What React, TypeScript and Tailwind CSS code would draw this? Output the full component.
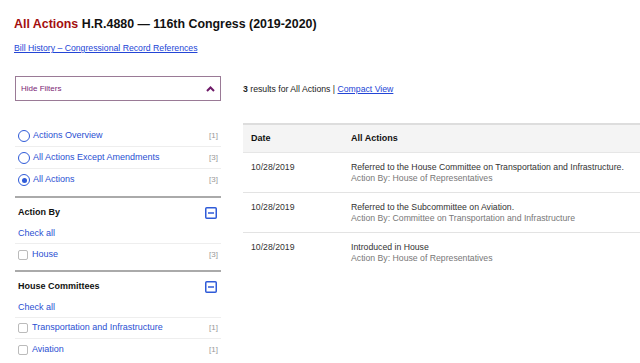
import React from "react";

const radios = [
  { label: "Actions Overview", count: 1, checked: false },
  { label: "All Actions Except Amendments", count: 3, checked: false },
  { label: "All Actions", count: 3, checked: true },
];

const sections = [
  { title: "Action By", items: [{ label: "House", count: 3 }] },
  {
    title: "House Committees",
    items: [
      { label: "Transportation and Infrastructure", count: 1 },
      { label: "Aviation", count: 1 },
    ],
  },
];

const actions = [
  {
    date: "10/28/2019",
    text: "Referred to the House Committee on Transportation and Infrastructure.",
    by: "House of Representatives",
  },
  {
    date: "10/28/2019",
    text: "Referred to the Subcommittee on Aviation.",
    by: "Committee on Transportation and Infrastructure",
  },
  {
    date: "10/28/2019",
    text: "Introduced in House",
    by: "House of Representatives",
  },
];

const Minus: React.FC = () => (
  <svg width="12" height="12" viewBox="0 0 12 12" className="shrink-0">
    <rect x="0.75" y="0.75" width="10.5" height="10.5" rx="1" fill="none" stroke="#2f5bd8" strokeWidth="1.5" />
    <line x1="3" y1="6" x2="9" y2="6" stroke="#2f5bd8" strokeWidth="1.5" />
  </svg>
);

const App: React.FC = () => {
  return (
    <div className="w-[640px] h-[363px] overflow-hidden bg-white font-['Liberation_Sans',Arial,sans-serif] text-[#222]">
      <div className="px-[14px] pt-[16px]">
        <h1 className="text-[12.4px] font-bold leading-[16px] text-[#111]">
          <span className="text-[#a30e0e]">All Actions</span> H.R.4880 — 116th Congress (2019-2020)
        </h1>
        <a className="block mt-[11px] text-[8.7px] leading-[11px] text-[#2345d6] underline">
          Bill History – Congressional Record References
        </a>
      </div>

      <div className="flex mt-[22px]">
        {/* filters */}
        <div className="w-[206px] ml-[15px] shrink-0">
          <div className="h-[25px] border border-[#9a7a96] flex items-center justify-between px-[5px] text-[8px] text-[#7b1e74]">
            <span>Hide Filters</span>
            <svg width="9" height="6" viewBox="0 0 9 6">
              <path d="M1 5 L4.5 1.5 L8 5" fill="none" stroke="#6e1a68" strokeWidth="2" />
            </svg>
          </div>

          <div className="mt-[24px]">
            {radios.map((r, i) => (
              <div
                key={i}
                className={`h-[22px] flex items-center justify-between pl-[3px] pr-[3px] ${i < radios.length - 1 ? "border-b border-[#eee]" : ""}`}
              >
                <div className="flex items-center gap-[3px]">
                  <span className="w-[12px] h-[12px] rounded-full border border-[#2f5bd8] flex items-center justify-center">
                    {r.checked && <span className="w-[5px] h-[5px] rounded-full bg-[#2f5bd8]" />}
                  </span>
                  <span className="text-[9px] text-[#2a4fd2]">{r.label}</span>
                </div>
                <span className="text-[8px] text-[#999]">[{r.count}]</span>
              </div>
            ))}
          </div>

          {sections.map((s, si) => (
            <div key={si} className="border-t-2 border-[#aaa] mt-[5px]">
              <div className="h-[26px] pt-[3px] flex items-center justify-between pl-[3px] pr-[4px]">
                <span className="text-[9px] font-bold text-[#111]">{s.title}</span>
                <Minus />
              </div>
              <div className="h-[20px] flex items-center pl-[3px] text-[9px] text-[#2a4fd2] border-b border-[#eee]">
                Check all
              </div>
              {s.items.map((it, ii) => (
                <div
                  key={ii}
                  className={`h-[21px] flex items-center justify-between pl-[3px] pr-[3px] ${ii < s.items.length - 1 ? "border-b border-[#eee]" : ""}`}
                >
                  <div className="flex items-center gap-[4px]">
                    <span className="w-[10px] h-[10px] rounded-[2px] border border-[#bbb]" />
                    <span className="text-[9px] text-[#2a4fd2]">{it.label}</span>
                  </div>
                  <span className="text-[8px] text-[#999]">[{it.count}]</span>
                </div>
              ))}
            </div>
          ))}
        </div>

        {/* results */}
        <div className="ml-[22px] flex-1">
          <p className="mt-[7px] text-[8.7px] leading-[12px] text-[#222]">
            <span className="font-bold">3</span> results for All Actions |{" "}
            <a className="text-[#2345d6] underline">Compact View</a>
          </p>

          <div className="mt-[28px] border-t-2 border-[#ddd]">
            <div className="h-[28px] bg-[#f4f4f4] flex items-center text-[9px] font-bold text-[#111] border-b border-[#e6e6e6]">
              <span className="w-[108px] pl-[8px]">Date</span>
              <span>All Actions</span>
            </div>
            {actions.map((a, i) => (
              <div
                key={i}
                className={`flex pt-[9px] pb-[8px] text-[8.7px] leading-[11px] ${i < actions.length - 1 ? "border-b border-[#e3e3e3]" : ""}`}
              >
                <span className="w-[108px] pl-[8px] text-[#333] shrink-0">{a.date}</span>
                <div className="whitespace-nowrap">
                  <div className="text-[#333]">{a.text}</div>
                  <div className="text-[#777]">Action By: {a.by}</div>
                </div>
              </div>
            ))}
          </div>
        </div>
      </div>
    </div>
  );
};

export default App;
